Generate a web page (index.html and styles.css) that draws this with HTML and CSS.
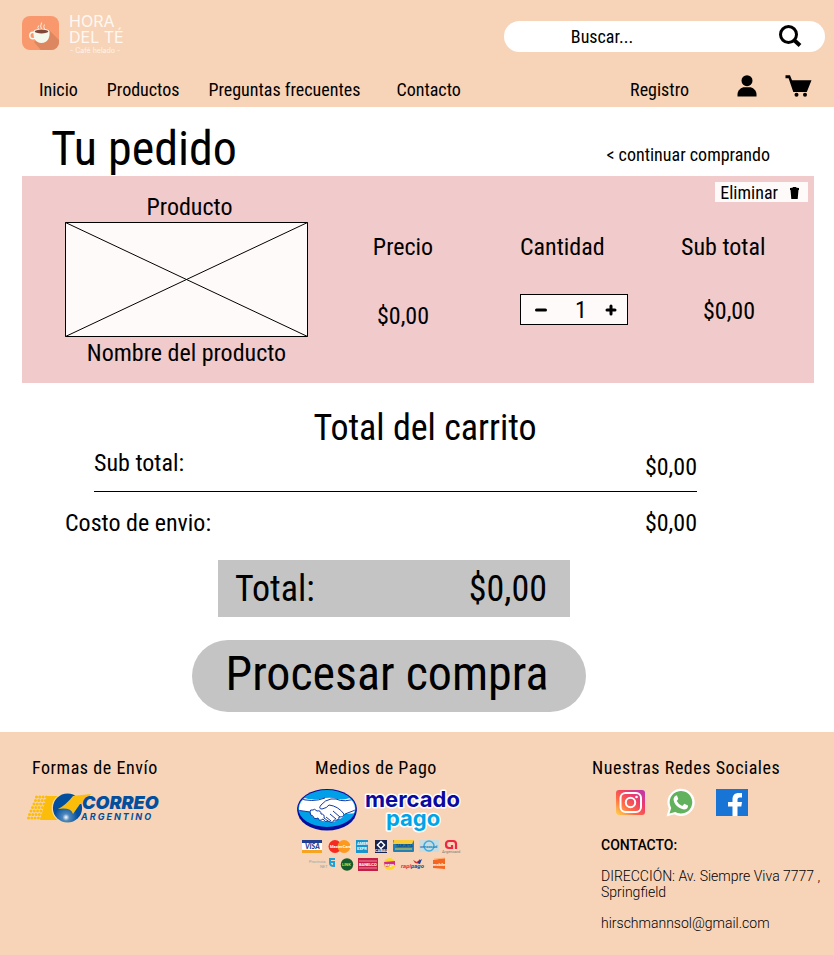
FILE: index.html
```html
<!DOCTYPE html>
<html lang="es">
<head>
<meta charset="utf-8">
<meta name="viewport" content="width=device-width, initial-scale=1">
<title>Hora del Té - Tu pedido</title>
<link rel="stylesheet" href="styles.css">
</head>
<body>
<header class="site-header">
  <div class="top-row">
    <a class="brand" href="#" aria-label="Hora del Té">
      <svg width="104" height="42" viewBox="0 0 104 42">
        <defs><clipPath id="tile"><rect y="3" width="37" height="34" rx="8"/></clipPath></defs>
        <g transform="translate(0 -2)">
          <g clip-path="url(#tile)">
            <rect y="3" width="37" height="34" fill="#f8986c"/>
            <path d="M27 17L42 32V42H23L12 29Z" fill="#dc8760"/>
          </g>
          <circle cx="11" cy="22.500" r="3.200" fill="none" stroke="#fdf8ec" stroke-width="1.400"/>
          <path d="M11.500 18.500H27.500C28 25 25.500 30 19.500 30S11 25 11.500 18.500Z" fill="#f5f8ec"/>
          <ellipse cx="19.500" cy="18.500" rx="7.900" ry="2.700" fill="#fdf8ec"/>
          <ellipse cx="19.500" cy="18.500" rx="6.800" ry="1.900" fill="#80483a"/>
          <path d="M16.500 16Q15 14.500 16.800 12.500M19.500 16Q17.800 13.500 19.600 9.500M22.500 16Q21 14 22.400 11.500" fill="none" stroke="#fdeee2" stroke-width="1"/>
        </g>
        <g class="brand-text"><text x="47" y="12">HORA</text><text x="47" y="28">DEL TÉ</text></g>
        <text class="brand-sub" x="48" y="38">- Café helado -</text>
      </svg>
    </a>
    <form class="search" role="search">
      <input type="search" placeholder="Buscar..." aria-label="Buscar">
      <button type="submit" aria-label="Buscar">
        <svg width="24" height="22" viewBox="0 0 24 22"><circle cx="10.500" cy="9.500" r="8" fill="none" stroke="#000" stroke-width="3"/><path d="M16 15L22 20.500" stroke="#000" stroke-width="4"/></svg>
      </button>
    </form>
  </div>
  <div class="nav-row">
    <nav class="nav">
      <a href="#">Inicio</a><a href="#">Productos</a><a href="#">Preguntas frecuentes</a><a href="#">Contacto</a>
    </nav>
    <div class="account">
      <a href="#">Registro</a>
      <a class="user" href="#" aria-label="Mi cuenta"><svg width="20" height="22" viewBox="0 0 20 22"><circle cx="10" cy="5.700" r="5.500"/><path d="M.5 21.500V19.500C.5 15 4.500 12.300 7.500 12.300H12.500C15.500 12.300 19.500 15 19.500 19.500V21.500Z"/></svg></a>
      <a class="cart" href="#" aria-label="Carrito"><svg width="27" height="22" viewBox="0 0 27 22"><path d="M.5.3H5L7 5.300H26.500L21.800 17H8.300L3.600 3.200H.5Z"/><circle cx="11.500" cy="19.800" r="2"/><circle cx="20" cy="19.800" r="2"/></svg></a>
    </div>
  </div>
</header>

<main class="page">
  <div class="title-row">
    <h1>Tu pedido</h1>
    <a href="#">&lt; continuar comprando</a>
  </div>

  <section class="item">
    <button class="remove" type="button">Eliminar
      <svg width="9" height="12" viewBox="0 0 9 12"><path d="M0 1L2.500 .7L3 0H6L6.500 .7L9 1V3H0ZM.5 2.500H8.500L7.700 12H1.300Z"/></svg>
    </button>
    <div class="product">
      <h2>Producto</h2>
      <svg class="thumb" viewBox="0 0 243 115" preserveAspectRatio="none" role="img" aria-label="Imagen del producto"><rect x=".5" y=".5" width="242" height="114" fill="#fffafa"/><path d="M.5.5H242.500V114.500H.5ZL242.500 114.500M242.500.5L.5 114.500" fill="none" stroke="#000"/></svg>
      <p>Nombre del producto</p>
    </div>
    <div class="price"><h2>Precio</h2><p>$0,00</p></div>
    <div class="quantity">
      <h2><label for="qty">Cantidad</label></h2>
      <div class="stepper">
        <button type="button" aria-label="Quitar uno"><svg width="12" height="12" viewBox="0 0 12 12"><path d="M1.500 6H10.500" stroke="#000" stroke-width="3" stroke-linecap="round"/></svg></button>
        <input id="qty" type="text" inputmode="numeric" value="1">
        <button type="button" aria-label="Agregar uno"><svg width="12" height="12" viewBox="0 0 12 12"><path d="M2 6H10M6 2V10" stroke="#000" stroke-width="3" stroke-linecap="round"/></svg></button>
      </div>
    </div>
    <div class="subtotal"><h2>Sub total</h2><p>$0,00</p></div>
  </section>

  <section class="summary">
    <h2>Total del carrito</h2>
    <div class="line line-sub"><span>Sub total:</span><span>$0,00</span></div>
    <div class="line"><span>Costo de envio:</span><span>$0,00</span></div>
  </section>
  <div class="checkout">
    <div class="total"><span>Total:</span><span>$0,00</span></div>
    <button class="process" type="button">Procesar compra</button>
  </div>
</main>

<footer class="site-footer">
  <section class="shipping">
    <h2>Formas de Envío</h2>
    <svg width="134" height="32" viewBox="0 0 134 32" role="img" aria-label="Correo Argentino">
      <defs>
        <radialGradient id="globe" cx=".45" cy=".82" r=".4"><stop offset="0" stop-color="#fff"/><stop offset=".3" stop-color="#4f87bd"/><stop offset="1" stop-color="#034f9d"/></radialGradient>
      </defs>
      <path d="M9.500 5H22M8.500 8.500H22M7 12H20M5.500 15.500H19M4 19H18M2.500 22.500H17M1.500 26H16" fill="none" stroke="#fcbd0a" stroke-width="3" stroke-linecap="round" stroke-dasharray="0 3.300"/>
      <path d="M20 4H35V28H13Z" fill="#fcbd0a"/>
      <circle cx="40" cy="16" r="15.300" fill="#f9dca8"/>
      <circle cx="40.500" cy="16" r="14.600" fill="url(#globe)"/>
      <path d="M46 4L64 2L57 12H53L46 22Q44 15 31 17Q39 13 46 4Z" fill="#fcbd0a"/>
      <text class="correo" x="55" y="17">CORREO</text>
      <text class="argentino" x="54" y="28">ARGENTINO</text>
    </svg>
  </section>

  <section class="payment">
    <h2>Medios de Pago</h2>
    <svg width="166" height="88" viewBox="0 0 166 88" role="img" aria-label="Mercado Pago y tarjetas">
      <defs><clipPath id="oval"><ellipse cx="31" cy="20.500" rx="28" ry="17.500"/></clipPath></defs>
      <ellipse cx="31" cy="22.500" rx="29.700" ry="20" fill="#000f9f"/>
      <ellipse cx="31" cy="20.500" rx="29.700" ry="19.500" fill="#0a0a9c"/>
      <ellipse cx="31" cy="20.500" rx="28.700" ry="18.500" fill="#00a0e8"/>
      <g clip-path="url(#oval)">
        <path d="M0 7Q15 14 29 10Q36 9 41 11Q51 13 62 6V25L48 26Q47 31 42 31Q38 36 32 33Q24 34 22 30Q16 31 14 24L0 22Z" fill="#fff"/>
        <path d="M2 10Q16 15 29 10M61 10Q48 15 40 11L35 11Q29 12 25 17Q22 21 26 21Q31 20 33 17Q42 18 48 26M0 22L14 24Q14 21 17 22Q18 20 21 23Q25 22 25 26Q29 26 28 30Q31 32 32 33M49 26L62 21M37 23L44 29M34 26L40 31M30 29L35 33M14 24Q14 28 17 28Q18 32 22 30Q23 34 27 31Q29 35 32 33Q37 36 38 32Q43 33 43 29Q48 29 48 26" fill="none" stroke="#153aa0" stroke-width="1"/>
      </g>
      <text class="mercado" x="69" y="19">mercado</text>
      <text class="pago" x="90" y="38">pago</text>

      <rect x="6" y="52" width="20" height="13" fill="#fff"/><path d="M6 52H26V55H6Z" fill="#203f91"/><path d="M6 62H26V65H6Z" fill="#f6a520"/><text class="tiny visa" x="9" y="61">VISA</text>
      <circle cx="39" cy="58.500" r="6.500" fill="#f52b20"/><circle cx="48" cy="58.500" r="6.500" fill="#fc9a20"/><text class="micro white" x="34" y="60">MasterCard</text>
      <rect x="60" y="52" width="12" height="13" fill="#1995ce"/><text class="micro white" x="61" y="57">AMER</text><text class="micro white" x="61" y="62">EXPR</text>
      <rect x="79" y="52" width="12" height="13" fill="#17234f"/><path d="M85 53.500L88.500 57L85 60.500L81.500 57Z" fill="none" stroke="#fff" stroke-width="1.500"/><text class="micro white" x="79" y="64">CABAL</text>
      <rect x="97" y="52" width="21" height="12" rx="1" fill="#2181b7"/><path d="M98 52H118L116 56H97Z" fill="#f9cc35"/><text class="micro tarjeta" x="100" y="59">TARJETA</text><path d="M99 61H116" stroke="#f9cc35"/>
      <rect x="123" y="52" width="20" height="12" fill="#c6dce0"/><circle cx="133" cy="58" r="5" fill="none" stroke="#3fa9df" stroke-width="1.500"/><text class="micro cenco" x="124" y="60">cencosud</text>
      <path d="M160 61V56Q160 53 157 53H153Q150 53 150 56.500Q150 60 153 60H156V57" fill="none" stroke="#ee2543" stroke-width="2.200"/><text class="micro argencard" x="146" y="65">Argencard</text>

      <text class="micro province" x="13" y="75">Provincia</text><text class="micro province" x="24" y="80">NET</text><path d="M34 70V75Q34 78 38 78V74H34M35 71H39" fill="none" stroke="#1ca0d8" stroke-width="2"/>
      <circle cx="51" cy="76.500" r="6.200" fill="#145d2a"/><text class="micro link" x="46" y="78">LINK</text>
      <rect x="62" y="70" width="20" height="13" fill="#c51e46"/><path d="M63 73H81M63 80H81" stroke="#e98c9e"/><text class="micro white" x="63" y="78">BANELCO</text>
      <circle cx="93.500" cy="76" r="6" fill="#fada25"/><path d="M88 74L99 73V77L89 79Z" fill="#d22d86"/><text class="micro white" x="89" y="78">pago</text>
      <path d="M117 72L121 74L124 71V76L119 75Z" fill="#e52c35"/><path d="M121 74L126 71L124 76Z" fill="#1b4397"/><text class="micro rapi" x="105" y="80">rapi<tspan class="rapi-blue">pago</tspan></text>
      <path d="M137 72L149 70V81L137 80Z" fill="#f26722"/><path d="M138 71L149 70" stroke="#ffb075"/><text class="micro white" x="137" y="78">mobile</text>
    </svg>
  </section>

  <section class="social">
    <h2>Nuestras Redes Sociales</h2>
    <div class="icons">
      <a href="#" aria-label="Instagram"><svg width="29" height="25" viewBox="0 0 29 25"><defs><linearGradient id="ig" x1="0" y1="1" x2="1" y2="0"><stop offset="0" stop-color="#ffd850"/><stop offset=".35" stop-color="#ff6b45"/><stop offset=".65" stop-color="#ef3c67"/><stop offset="1" stop-color="#b837b5"/></linearGradient></defs><rect width="29" height="25" rx="3" fill="url(#ig)"/><g fill="none" stroke="#fff" stroke-width="2"><rect x="4.500" y="3" width="20.500" height="19" rx="5"/><circle cx="14.500" cy="12.500" r="4.700"/></g><circle cx="20.500" cy="7" r="1.300" fill="#fff"/></svg></a>
      <a href="#" aria-label="WhatsApp"><svg width="29" height="29" viewBox="0 0 29 29"><path d="M.5 28.500L2.800 20.500A13.700 13.700 0 1 1 8.300 26.300Z" fill="#fff"/><path d="M3.500 25.500L5.200 20A11.300 11.300 0 1 1 9.200 24Z" fill="#62b15c"/><path d="M10 7.500Q8 8 7.500 11C7.500 16 13 21 18 21.500Q21.500 21.500 22 18.500V17.500L18.300 15.700L16.300 18Q12.500 16.500 10.700 13L12.300 11L11 7.500Z" fill="#fff"/></svg></a>
      <a href="#" aria-label="Facebook"><svg width="32" height="27" viewBox="0 0 32 27"><rect width="32" height="27" fill="#1975d5"/><path d="M16.500 27V17.500H12V13H16.500V10.500C16.500 6 19 4 22.500 4H26V8.500H23.500Q21.500 8.500 21.500 10.500V13H26L25.300 17.500H21.500V27Z" fill="#fff"/></svg></a>
    </div>
    <address>
      <strong>CONTACTO:</strong>
      <span>DIRECCIÓN: Av. Siempre Viva 7777 , Springfield</span>
      <a href="mailto:hirschmannsol@gmail.com">hirschmannsol@gmail.com</a>
    </address>
  </section>
</footer>
</body>
</html>
```

FILE: styles.css
```css
* { box-sizing: border-box; }
body { margin: 0; background: #fff; color: #000; font: 18px/21px "Roboto Condensed", "Liberation Sans Narrow", Roboto, sans-serif; }
h1, h2, p { margin: 0; font-weight: 400; }
a { color: inherit; text-decoration: none; }
svg { display: block; overflow: visible; }
button, input { font: inherit; color: inherit; border: 0; padding: 0; background: none; }

.site-header { background: #f7d3b8; padding: 12px 9px 5px 22px; }
.top-row { display: flex; justify-content: space-between; align-items: center; height: 48px; }
.brand-text { font: 16px Inter, sans-serif; fill: #fff8f2; }
.brand-sub { font: 7px Inter, sans-serif; fill: #fff3ea; }
.search { display: flex; align-items: center; justify-content: space-between; width: 40%; height: 31px; padding: 0 23px 0 67px; border-radius: 16px; background: #fff; }
.search input { flex: 1; min-width: 0; outline: 0; }
.search input::placeholder { color: #000; opacity: 1; }
.nav-row { display: flex; justify-content: space-between; align-items: center; margin-top: 17px; padding: 0 13px 0 17px; height: 25px; }
.nav, .account { display: flex; align-items: center; }
.nav { gap: 29px; }
.nav a:last-child { margin-left: 7px; }
.user { margin: 0 28px 8px 48px; }
.cart { margin-bottom: 8px; }

.page { padding: 14px 20px 20px 22px; }
.title-row { display: flex; justify-content: space-between; align-items: flex-end; height: 55px; padding: 0 44px 0 29px; }
.title-row h1 { font-size: 48px; line-height: 55px; }
.title-row a { margin-bottom: 11px; }

.item { position: relative; display: grid; grid-template-columns: 243fr 190fr 183fr 96fr; padding: 17px 37px 16px 43px; background: #f1cacb; font-size: 24px; line-height: 28px; }
.item h2 { font-size: 24px; }
.product, .price { text-align: center; }
.product h2 { padding-left: 6px; }
.thumb { width: 100%; height: 115px; margin: 1px 0 2px; }
.price, .quantity, .subtotal { padding-top: 40px; }
.price p { margin-top: 41px; }
.quantity { padding-left: 22px; }
.subtotal p { margin-top: 36px; text-align: center; }
.stepper { display: flex; align-items: center; width: 108px; height: 31px; margin-top: 33px; padding: 0 10px 0 14px; border: 1px solid #000; background: #fffafa; }
.stepper input { flex: 1; min-width: 0; text-align: center; padding-left: 10px; }
.remove { position: absolute; top: 6px; right: 6px; display: flex; align-items: center; gap: 12px; height: 20px; padding: 1px 9px 0 5px; background: #fffafa; font-size: 18px; line-height: 20px; }

.summary { margin: 24px 29px 0 43px; font-size: 24px; line-height: 28px; }
.summary h2 { font-size: 36px; line-height: 42px; text-align: center; }
.line { display: flex; justify-content: space-between; margin-top: 17px; padding-right: 88px; }
.line-sub { margin: 0 88px 0 29px; padding: 0 0 10px; border-bottom: 1px solid #000; height: 43px; }
.line-sub span:last-child { padding-top: 4px; }
.checkout { display: flex; flex-direction: column; align-items: center; gap: 23px; margin: 23px 58px 0 0; }
.total { display: flex; justify-content: space-between; align-items: center; width: 352px; max-width: 100%; height: 57px; margin-left: 10px; padding: 0 23px 0 17px; background: #c4c4c4; font-size: 36px; line-height: 42px; }
.process { max-width: 100%; height: 72px; padding: 0 38px 4px 34px; border-radius: 36px; background: #c4c4c4; font-size: 48px; line-height: 56px; }

.site-footer { display: grid; grid-template-columns: 260fr 297fr 223fr; padding: 25px 22px 24px 32px; background: #f7d3b8; }
.site-footer h2 { font-size: 18px; letter-spacing: 0.03em; white-space: nowrap; }
.shipping svg { margin: 14px 0 0 -5px; }
.payment { padding-left: 4px; }
.payment h2 { padding-left: 19px; }
.payment svg { margin-top: 10px; }
.social { padding-left: 3px; }
.icons { display: flex; align-items: center; gap: 21px; height: 29px; margin: 10px 0 0 24px; }
address { display: flex; flex-direction: column; gap: 15px; margin: 20px -10px 0 9px; font: 300 14px/16px Roboto, sans-serif; }
address strong { font-weight: 500; }

.correo { font: italic 900 18px Inter, sans-serif; fill: #034f9d; }
.argentino { font: italic 700 9px Inter, sans-serif; letter-spacing: 2px; fill: #034f9d; }
.mercado, .pago { font: 700 22px Inter, sans-serif; fill: #0a0aa0; stroke: #fff; stroke-width: 3px; stroke-linejoin: round; paint-order: stroke; }
.pago { fill: #00a5e8; }
.tiny { font: italic 900 7px Lato, sans-serif; }
.visa { fill: #203f91; }
.micro { font: 700 4px Roboto, sans-serif; fill: #777; }
.white { fill: #fff; }
.tarjeta { fill: #17477a; }
.cenco { fill: #167fc0; }
.province { fill: #94a7aa; font-weight: 400; }
.argencard { font-weight: 400; }
.link { fill: #d3df42; }
.rapi { fill: #e52c35; font-size: 6px; font-style: italic; }
.rapi-blue { fill: #1b4397; }
```
